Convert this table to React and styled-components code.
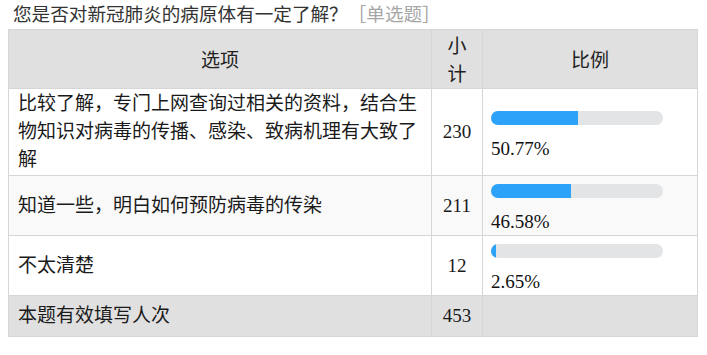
import React from "react";
import styled, { createGlobalStyle } from "styled-components";

const Global = createGlobalStyle`
  html, body { margin: 0; padding: 0; background: #fff; }
  body {
    font-family: "Liberation Serif", "Noto Sans CJK SC", serif;
    color: #1a1a1a;
    text-spacing-trim: space-all;
  }
`;

const Page = styled.div`
  padding: 0 8px;
`;

const Title = styled.div`
  font-family: "Noto Sans CJK SC", sans-serif;
  font-size: 18.6px;
  line-height: 26px;
  padding-left: 5px;
  margin-bottom: 3px;
  color: #333;
  white-space: nowrap;
  text-spacing-trim: space-all;
`;

const Tag = styled.span`
  color: #a6a6a6;
`;

const Table = styled.table`
  width: 689px;
  table-layout: fixed;
  border-collapse: collapse;
  font-size: 19px;
  border: 1px solid #d6d6d6;
`;

const HeadCell = styled.th`
  background: #e0e0e0;
  font-weight: normal;
  text-align: center;
  vertical-align: middle;
  padding: 1px 10px;
  line-height: 28px;
  border: 1px solid #d6d6d6;
  font-family: "Noto Sans CJK SC", sans-serif;
  color: #222;
`;

const Row = styled.tr`
  background: ${(p) => (p.$stripe ? "#f9f9f9" : p.$foot ? "#e0e0e0" : "#fff")};
`;

const Cell = styled.td`
  border: 1px solid #d6d6d6;
  vertical-align: middle;
  line-height: 28px;
  padding: ${(p) => (p.$foot ? "6px 9px" : "1px 9px")};
  text-align: ${(p) => (p.$center ? "center" : "left")};
  color: #1a1a1a;
`;

const PercentCell = styled.td`
  border: 1px solid #d6d6d6;
  vertical-align: middle;
  padding: 8px 8px 1px;
`;

const Track = styled.div`
  width: 172px;
  height: 14px;
  border-radius: 7px;
  background: #e3e4e6;
  overflow: hidden;
  margin-bottom: 12px;
`;

const Fill = styled.div`
  height: 100%;
  background: #2ca3f9;
`;

const Percent = styled.div`
  line-height: 24px;
  color: #111;
`;

const rows = [
  { label: "比较了解，专门上网查询过相关的资料，结合生物知识对病毒的传播、感染、致病机理有大致了解", count: 230, pct: 50.77 },
  { label: "知道一些，明白如何预防病毒的传染", count: 211, pct: 46.58 },
  { label: "不太清楚", count: 12, pct: 2.65 },
];

export default function App() {
  return (
    <Page>
      <Global />
      <Title>
        您是否对新冠肺炎的病原体有一定了解？<Tag>［单选题］</Tag>
      </Title>
      <Table>
        <colgroup>
          <col style={{ width: 423 }} />
          <col style={{ width: 51 }} />
          <col style={{ width: 215 }} />
        </colgroup>
        <thead>
          <tr>
            <HeadCell>选项</HeadCell>
            <HeadCell>小计</HeadCell>
            <HeadCell>比例</HeadCell>
          </tr>
        </thead>
        <tbody>
          {rows.map((r, i) => (
            <Row key={i} $stripe={i === 1}>
              <Cell>{r.label}</Cell>
              <Cell $center>{r.count}</Cell>
              <PercentCell>
                <Track>
                  <Fill style={{ width: `${r.pct}%` }} />
                </Track>
                <Percent>{r.pct.toFixed(2)}%</Percent>
              </PercentCell>
            </Row>
          ))}
          <Row $foot>
            <Cell $foot>本题有效填写人次</Cell>
            <Cell $foot $center>453</Cell>
            <Cell $foot />
          </Row>
        </tbody>
      </Table>
    </Page>
  );
}
